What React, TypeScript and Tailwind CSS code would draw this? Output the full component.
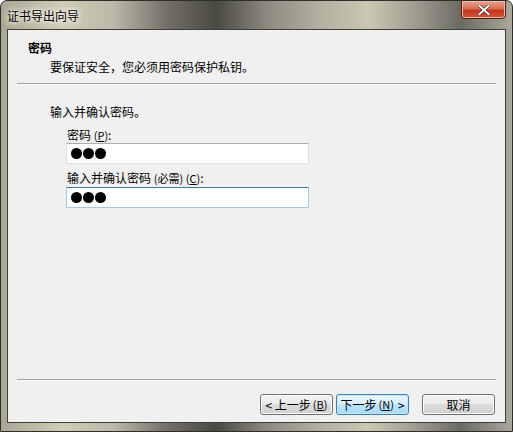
// Certificate Export Wizard – password page (Windows 7 Aero dialog)

const font = { fontFamily: '"SimSun", "Noto Sans CJK SC", "Liberation Sans", sans-serif' };

function Key({ k }: { k: string }) {
  return (
    <span className="text-[11px]">
      (<span className="underline">{k}</span>)
    </span>
  );
}

function Dots() {
  return (
    <div className="flex items-center gap-[1px]">
      <span className="w-[11px] h-[11px] rounded-full bg-black" />
      <span className="w-[11px] h-[11px] rounded-full bg-black" />
      <span className="w-[11px] h-[11px] rounded-full bg-black" />
    </div>
  );
}

function WinButton({ children, primary = false }: { children: React.ReactNode; primary?: boolean }) {
  return (
    <button
      className={`w-[73px] h-[21px] rounded-[3px] border text-[12px] text-black flex items-center justify-center gap-[2px] ${
        primary
          ? 'border-[#3c7fb1] bg-[linear-gradient(#eaf6fd_0%,#d9f0fc_45%,#bee6fd_50%,#a7d9f5_100%)] shadow-[inset_0_0_0_1px_#c8e7f8]'
          : 'border-[#707070] bg-[linear-gradient(#f2f2f2_0%,#ebebeb_45%,#dddddd_50%,#cfcfcf_100%)] shadow-[inset_0_0_0_1px_#fcfcfc]'
      }`}
    >
      {children}
    </button>
  );
}

export default function App() {
  return (
    <div
      style={font}
      className="w-[513px] h-[432px] rounded-t-[7px] overflow-hidden border border-[#2e2e2a] bg-[linear-gradient(90deg,#a9a694_0%,#d0ccb9_12%,#bdb9a8_22%,#74726a_32%,#4a4942_42%,#8c8a7f_52%,#b2af9f_62%,#cbc7b4_72%,#9a988b_82%,#6c6b63_90%,#aaa89b_100%)] flex flex-col"
    >
      {/* ── TITLE BAR ── */}
      <div className="h-[28px] flex items-start justify-between pl-[6px] pr-[6px] shrink-0">
        <span className="mt-[6px] text-[12px] text-black [text-shadow:0_0_6px_#f4f2e8,0_0_3px_#f4f2e8,0_0_8px_#f4f2e8]">
          证书导出向导
        </span>
        <div className="w-[45px] h-[19px] -mt-px rounded-b-[4px] border border-[#5a1b12] bg-[linear-gradient(#e8a493_0%,#d66e57_45%,#c4391f_55%,#d2553a_100%)] shadow-[inset_0_0_0_1px_#f0b9a9] flex items-center justify-center">
          <svg width="12" height="10" viewBox="0 0 12 10">
            <path d="M1.5 1 L10.5 9 M10.5 1 L1.5 9" stroke="#3b1a14" strokeWidth="3.2" strokeLinecap="square" />
            <path d="M1.5 1 L10.5 9 M10.5 1 L1.5 9" stroke="#ffffff" strokeWidth="2" strokeLinecap="square" />
          </svg>
        </div>
      </div>

      {/* ── CLIENT AREA ── */}
      <div className="mx-[6px] mb-[8px] flex-1 border border-[#3f3e39] bg-[#f0f0f0] flex flex-col text-[12px] text-black">
        {/* header */}
        <div className="h-[53px] shrink-0 pl-[20px] pt-[11px]">
          <div className="font-bold leading-[14px]">密码</div>
          <div className="pl-[22px] mt-[5px] leading-[14px]">要保证安全，您必须用密码保护私钥。</div>
        </div>
        <div className="mx-[9px] h-[2px] border-t border-[#a0a0a0] border-b border-b-white" />

        {/* body */}
        <div className="flex-1 pl-[42px] pt-[20px]">
          <div className="leading-[14px]">输入并确认密码。</div>
          <div className="pl-[16px] mt-[9px] flex flex-col">
            <div className="leading-[14px] pl-[1px]">
              密码 <Key k="P" />:
            </div>
            <div className="mt-[1px] w-[243px] h-[21px] bg-white border border-[#dbdfe6] border-t-[#abadb3] flex items-center pl-[4px]">
              <Dots />
            </div>
            <div className="leading-[14px] mt-[7px] pl-[1px]">
              输入并确认密码 <span className="text-[11px]">(必需)</span> <Key k="C" />:
            </div>
            <div className="mt-[2px] w-[243px] h-[21px] bg-white border border-[#a4c9e3] border-t-[#3d7bad] flex items-center pl-[4px]">
              <Dots />
            </div>
          </div>
        </div>

        {/* footer */}
        <div className="mx-[9px] h-[2px] border-t border-[#a0a0a0] border-b border-b-white" />
        <div className="h-[41px] shrink-0 flex items-start justify-end pr-[10px] pt-[13px]">
          <WinButton>
            <span>&lt; 上一步</span>
            <Key k="B" />
          </WinButton>
          <div className="w-[3px]" />
          <WinButton primary>
            <span>下一步</span>
            <Key k="N" />
            <span className="ml-[2px]">&gt;</span>
          </WinButton>
          <div className="w-[13px]" />
          <WinButton>取消</WinButton>
        </div>
      </div>
    </div>
  );
}
